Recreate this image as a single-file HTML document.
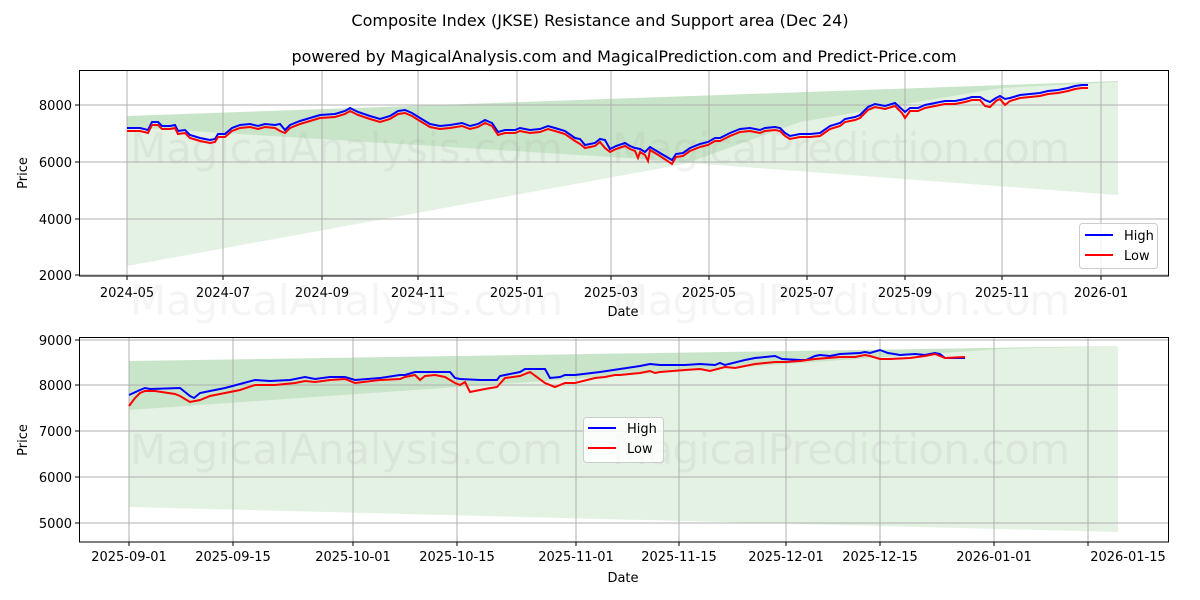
<!DOCTYPE html>
<html><head><meta charset="utf-8"><style>html,body{margin:0;padding:0;background:#fff}svg{display:block}text{font-family:"DejaVu Sans","Liberation Sans",sans-serif;fill:#000}</style></head><body>
<svg width="1200" height="600" viewBox="0 0 1200 600" xmlns="http://www.w3.org/2000/svg">
<text x="600" y="26" font-size="16" text-anchor="middle">Composite Index (JKSE) Resistance and Support area (Dec 24)</text>
<text x="624" y="62" font-size="16" text-anchor="middle">powered by MagicalAnalysis.com and MagicalPrediction.com and Predict-Price.com</text>

<!-- TOP CHART -->
<g>
<polygon points="127,116 1118,81 1118,195 690,163 127,266" fill="#2e9b2e" fill-opacity="0.13"/>
<polygon points="127,116 1118,81 1118,82 1000,88 800,122 690,162 127,127" fill="#2e9b2e" fill-opacity="0.15"/>
<g stroke="#b0b0b0" stroke-width="1">
<line x1="127" y1="70" x2="127" y2="276"/><line x1="223" y1="70" x2="223" y2="276"/><line x1="322" y1="70" x2="322" y2="276"/><line x1="418" y1="70" x2="418" y2="276"/><line x1="517" y1="70" x2="517" y2="276"/><line x1="611" y1="70" x2="611" y2="276"/><line x1="709" y1="70" x2="709" y2="276"/><line x1="807" y1="70" x2="807" y2="276"/><line x1="905" y1="70" x2="905" y2="276"/><line x1="1002" y1="70" x2="1002" y2="276"/><line x1="1101" y1="70" x2="1101" y2="276"/>
<line x1="79" y1="105" x2="1168" y2="105"/><line x1="79" y1="162" x2="1168" y2="162"/><line x1="79" y1="219" x2="1168" y2="219"/><line x1="79" y1="275" x2="1168" y2="275"/>
</g>
<text x="130" y="163" font-size="42" style="fill:#999;fill-opacity:.13" textLength="433">MagicalAnalysis.com</text>
<text x="612" y="163" font-size="42" style="fill:#999;fill-opacity:.13" textLength="458">MagicalPrediction.com</text>
<polyline fill="none" stroke="#0000ff" stroke-width="2" points="127,128 140,128 148,130 152,122 158,122 162,126 170,126 175,125 178,131 185,130 190,135 200,138 210,140 215,139 218,134 225,134 232,128 240,125 250,124 258,126 265,124 275,125 280,124 285,130 290,125 300,121 310,118 320,115 335,114 345,111 350,108 358,112 370,116 380,119 390,116 398,111 405,110 412,113 420,118 430,124 440,126 450,125 462,123 470,126 478,124 485,120 492,123 498,132 505,130 515,130 520,128 530,130 540,129 548,126 555,128 565,131 575,138 580,139 585,145 595,143 600,139 605,140 610,149 616,146 625,143 630,146 635,148 640,149 645,152 650,147 660,153 672,160 676,154 683,153 690,148 700,144 708,142 715,138 720,138 730,133 740,129 750,128 760,130 765,128 775,127 780,128 785,133 790,136 800,134 810,134 820,133 830,126 840,123 845,119 855,117 860,115 868,107 875,104 885,106 895,103 905,112 910,108 918,108 925,105 935,103 945,101 955,101 965,99 972,97 980,97 985,100 990,102 996,98 1000,96 1005,99 1010,98 1020,95 1030,94 1040,93 1048,91 1058,90 1068,88 1075,86 1082,85 1088,85"/>
<polyline fill="none" stroke="#ff0000" stroke-width="2" transform="translate(0,3)" points="127,128 140,128 148,130 152,122 158,122 162,126 170,126 175,125 178,131 185,130 190,135 200,138 210,140 215,139 218,134 225,134 232,128 240,125 250,124 258,126 265,124 275,125 280,128 285,130 290,125 300,121 310,118 320,115 335,114 345,111 350,108 358,112 370,116 380,119 390,116 398,111 405,110 412,113 420,118 430,124 440,126 450,125 462,123 470,126 478,124 485,120 492,123 498,132 505,130 515,130 520,128 530,130 540,129 548,126 555,128 565,131 575,138 580,141 585,145 595,143 600,139 605,145 610,149 616,146 625,143 630,146 635,148 638,155 640,149 645,152 648,158 650,147 660,153 672,161 676,154 683,153 690,148 700,144 708,142 715,138 720,138 730,133 740,129 750,128 760,130 765,128 775,127 780,128 785,133 790,136 800,134 810,134 820,133 830,126 840,123 845,119 855,117 860,115 868,107 875,104 885,106 895,103 902,110 905,115 910,108 918,108 925,105 935,103 945,101 955,101 965,99 972,97 980,97 985,103 990,104 996,98 1000,96 1005,102 1010,98 1020,95 1030,94 1040,93 1048,91 1058,90 1068,88 1075,86 1082,85 1088,85"/>
<rect x="79.5" y="70.5" width="1089" height="205.5" fill="none" stroke="#000" stroke-width="1"/>
<g stroke="#000"><line x1="75" y1="105" x2="79" y2="105"/><line x1="75" y1="162" x2="79" y2="162"/><line x1="75" y1="219" x2="79" y2="219"/><line x1="75" y1="275" x2="79" y2="275"/>
<line x1="127" y1="276" x2="127" y2="280"/><line x1="223" y1="276" x2="223" y2="280"/><line x1="322" y1="276" x2="322" y2="280"/><line x1="418" y1="276" x2="418" y2="280"/><line x1="517" y1="276" x2="517" y2="280"/><line x1="611" y1="276" x2="611" y2="280"/><line x1="709" y1="276" x2="709" y2="280"/><line x1="807" y1="276" x2="807" y2="280"/><line x1="905" y1="276" x2="905" y2="280"/><line x1="1002" y1="276" x2="1002" y2="280"/><line x1="1101" y1="276" x2="1101" y2="280"/></g>
<g font-size="13" text-anchor="end"><text x="72" y="110">8000</text><text x="72" y="167">6000</text><text x="72" y="224">4000</text><text x="72" y="280">2000</text></g>
<g font-size="13" text-anchor="middle"><text x="127" y="297">2024-05</text><text x="223" y="297">2024-07</text><text x="322" y="297">2024-09</text><text x="418" y="297">2024-11</text><text x="517" y="297">2025-01</text><text x="611" y="297">2025-03</text><text x="709" y="297">2025-05</text><text x="807" y="297">2025-07</text><text x="905" y="297">2025-09</text><text x="1002" y="297">2025-11</text><text x="1101" y="297">2026-01</text>
<text x="623" y="316">Date</text></g>
<text font-size="13" text-anchor="middle" transform="translate(27,173) rotate(-90)">Price</text>
<rect x="1079.5" y="223.5" width="78" height="45" rx="3" fill="#fff" fill-opacity="0.8" stroke="#ccc"/>
<line x1="1085" y1="235" x2="1113" y2="235" stroke="#0000ff" stroke-width="2"/><text x="1124" y="240" font-size="13">High</text>
<line x1="1085" y1="255" x2="1113" y2="255" stroke="#ff0000" stroke-width="2"/><text x="1124" y="260" font-size="13">Low</text>
</g>

<text x="130" y="315" font-size="42" style="fill:#999;fill-opacity:.1" textLength="433">MagicalAnalysis.com</text>
<text x="612" y="315" font-size="42" style="fill:#999;fill-opacity:.1" textLength="458">MagicalPrediction.com</text>

<!-- BOTTOM CHART -->
<g>
<polygon points="129,361 1118,346 1118,532 129,507" fill="#2e9b2e" fill-opacity="0.13"/>
<polygon points="129,361 1118,346 1000,349 129,410" fill="#2e9b2e" fill-opacity="0.15"/>
<g stroke="#b0b0b0" stroke-width="1">
<line x1="129" y1="337" x2="129" y2="542"/><line x1="233" y1="337" x2="233" y2="542"/><line x1="353" y1="337" x2="353" y2="542"/><line x1="457" y1="337" x2="457" y2="542"/><line x1="576" y1="337" x2="576" y2="542"/><line x1="679" y1="337" x2="679" y2="542"/><line x1="786" y1="337" x2="786" y2="542"/><line x1="880" y1="337" x2="880" y2="542"/><line x1="994" y1="337" x2="994" y2="542"/><line x1="1088" y1="337" x2="1088" y2="542"/>
<line x1="79" y1="340" x2="1168" y2="340"/><line x1="79" y1="385" x2="1168" y2="385"/><line x1="79" y1="431" x2="1168" y2="431"/><line x1="79" y1="477" x2="1168" y2="477"/><line x1="79" y1="523" x2="1168" y2="523"/>
</g>
<text x="130" y="464" font-size="42" style="fill:#999;fill-opacity:.13" textLength="433">MagicalAnalysis.com</text>
<text x="612" y="464" font-size="42" style="fill:#999;fill-opacity:.13" textLength="458">MagicalPrediction.com</text>
<polyline fill="none" stroke="#0000ff" stroke-width="2" points="129,395 140,390 145,388 150,389 180,388 185,392 190,396 194,398 200,393 210,391 225,388 240,384 255,380 270,381 290,380 305,377 315,379 330,377 345,377 355,380 380,378 400,375 405,375 415,372 450,372 455,378 460,379 480,380 497,380 500,376 520,372 525,369 545,369 550,378 560,377 565,375 575,375 600,372 620,369 640,366 650,364 660,365 685,365 700,364 715,365 720,363 725,365 745,360 755,358 765,357 775,356 782,359 800,360 806,360 815,356 820,355 830,356 840,354 860,353 865,352 870,353 880,350 888,353 900,355 915,354 925,355 935,353 940,354 945,358 965,358"/>
<polyline fill="none" stroke="#ff0000" stroke-width="2" points="129,406 135,398 140,393 145,391 155,391 175,394 180,396 185,399 190,402 200,400 210,396 225,393 240,390 255,385 275,385 295,383 305,381 315,382 330,380 345,379 355,383 380,380 400,379 405,377 415,375 420,380 425,376 435,375 445,377 455,383 460,385 465,382 470,392 485,389 497,387 505,378 520,376 530,372 545,383 555,387 565,383 575,383 595,378 605,377 615,375 620,375 640,373 650,371 655,373 660,372 685,370 700,369 710,371 725,367 735,368 745,366 755,364 765,363 775,362 786,362 800,361 815,359 840,357 855,357 865,355 870,356 880,359 890,359 910,358 925,356 935,354 945,358 965,357"/>
<rect x="79.5" y="337.5" width="1089" height="204.5" fill="none" stroke="#000" stroke-width="1"/>
<g stroke="#000"><line x1="75" y1="340" x2="79" y2="340"/><line x1="75" y1="385" x2="79" y2="385"/><line x1="75" y1="431" x2="79" y2="431"/><line x1="75" y1="477" x2="79" y2="477"/><line x1="75" y1="523" x2="79" y2="523"/>
<line x1="129" y1="542" x2="129" y2="546"/><line x1="233" y1="542" x2="233" y2="546"/><line x1="353" y1="542" x2="353" y2="546"/><line x1="457" y1="542" x2="457" y2="546"/><line x1="576" y1="542" x2="576" y2="546"/><line x1="679" y1="542" x2="679" y2="546"/><line x1="786" y1="542" x2="786" y2="546"/><line x1="880" y1="542" x2="880" y2="546"/><line x1="994" y1="542" x2="994" y2="546"/><line x1="1088" y1="542" x2="1088" y2="546"/></g>
<g font-size="13" text-anchor="end"><text x="72" y="345">9000</text><text x="72" y="390">8000</text><text x="72" y="436">7000</text><text x="72" y="482">6000</text><text x="72" y="528">5000</text></g>
<g font-size="13" text-anchor="middle"><text x="129" y="561">2025-09-01</text><text x="233" y="561">2025-09-15</text><text x="353" y="561">2025-10-01</text><text x="457" y="561">2025-10-15</text><text x="576" y="561">2025-11-01</text><text x="679" y="561">2025-11-15</text><text x="786" y="561">2025-12-01</text><text x="880" y="561">2025-12-15</text><text x="994" y="561">2026-01-01</text><text x="1128" y="561">2026-01-15</text>
<text x="623" y="582">Date</text></g>
<text font-size="13" text-anchor="middle" transform="translate(27,440) rotate(-90)">Price</text>
<rect x="583.5" y="417.5" width="80" height="45" rx="3" fill="#fff" fill-opacity="0.8" stroke="#ccc"/>
<line x1="588" y1="428" x2="616" y2="428" stroke="#0000ff" stroke-width="2"/><text x="627" y="433" font-size="13">High</text>
<line x1="588" y1="448" x2="616" y2="448" stroke="#ff0000" stroke-width="2"/><text x="627" y="453" font-size="13">Low</text>
</g>
</svg>
</body></html>
